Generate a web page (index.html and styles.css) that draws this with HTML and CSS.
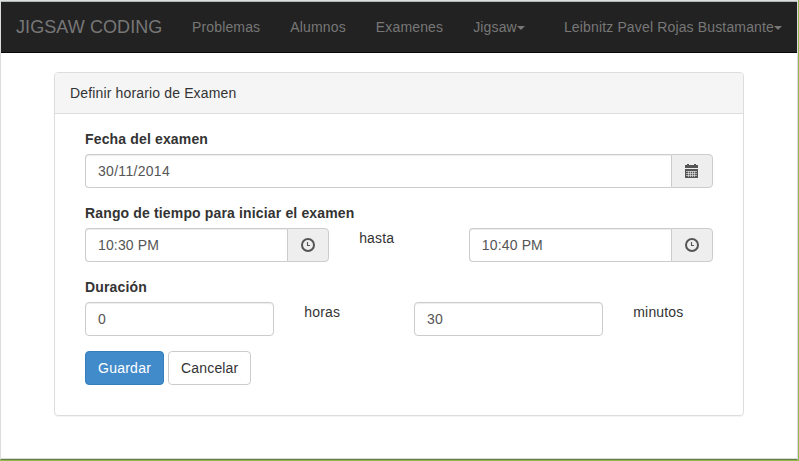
FILE: index.html
```html
<!DOCTYPE html>
<html lang="es">
<head>
<meta charset="utf-8">
<title>Jigsaw Coding</title>
<link rel="stylesheet" href="styles.css">
</head>
<body>
<div class="window">
  <nav class="navbar">
    <a class="brand">JIGSAW CODING</a>
    <a class="nav-item">Problemas</a>
    <a class="nav-item">Alumnos</a>
    <a class="nav-item">Examenes</a>
    <a class="nav-item">Jigsaw<span class="caret"></span></a>
    <a class="nav-item user">Leibnitz Pavel Rojas Bustamante<span class="caret"></span></a>
  </nav>
  <main class="panel">
    <header class="panel-heading">Definir horario de Examen</header>
    <form class="panel-body">
      <label>Fecha del examen</label>
      <div class="row">
        <div class="col full group">
          <div class="control date">30/11/2014</div>
          <div class="addon"><svg width="14" height="14" viewBox="0 0 14 14"><path fill="#555" d="M0 1h2V0h2v1h5V0h2v1h2v3H0zM0 5h13v9H0z"/><path stroke="#eee" stroke-width=".6" d="M1 7.5h11M1 9.5h11M1 11.5h11M3.5 7v6M5.5 7v6M7.5 7v6M9.5 7v6"/></svg></div>
        </div>
      </div>
      <label>Rango de tiempo para iniciar el examen</label>
      <div class="row">
        <div class="col c5 group">
          <div class="control">10:30 PM</div>
          <div class="addon"><svg width="14" height="14" viewBox="0 0 14 14"><circle cx="7" cy="7" r="6" fill="none" stroke="#555" stroke-width="2"/><path fill="none" stroke="#555" stroke-width="1.1" d="M6.5 4v3.5H9"/></svg></div>
        </div>
        <div class="col c2">hasta</div>
        <div class="col c5 group">
          <div class="control">10:40 PM</div>
          <div class="addon"><svg width="14" height="14" viewBox="0 0 14 14"><circle cx="7" cy="7" r="6" fill="none" stroke="#555" stroke-width="2"/><path fill="none" stroke="#555" stroke-width="1.1" d="M6.5 4v3.5H9"/></svg></div>
        </div>
      </div>
      <label>Duración</label>
      <div class="row">
        <div class="col c4"><div class="control">0</div></div>
        <div class="col c2">horas</div>
        <div class="col c4"><div class="control">30</div></div>
        <div class="col c2">minutos</div>
      </div>
      <div class="actions">
        <button type="button" class="btn primary">Guardar</button>
        <button type="button" class="btn">Cancelar</button>
      </div>
    </form>
  </main>
</div>
</body>
</html>
```
FILE: styles.css
```css
* { box-sizing: border-box; }
html { height: 100%; }
body {
  margin: 0;
  height: 461px;
  padding: 0 1px 1px 0;
  background: #8fb850;
  color: #333;
  font: 14px/20px "Liberation Sans", Arial, sans-serif;
  letter-spacing: .15px;
  overflow: hidden;
}
.window {
  height: 460px;
  background: #fff;
  border-left: 1px solid #ddd;
  border-right: 1px solid #ddd;
  border-bottom: 1px solid #66803f;
  border-top: 1px solid #dcdfe0;
  box-shadow: inset 0 1px #b4b8b9, inset 0 -1px #d8dad6;
  padding-top: 1px;
}
.navbar {
  display: flex;
  height: 51px;
  background: #222;
  border-bottom: 1px solid #080808;
  color: #777;
}
.brand { padding: 15px; width: 176px; font-size: 18px; letter-spacing: .08px; white-space: nowrap; }
.nav-item { padding: 15px; white-space: nowrap; }
.user { margin-left: auto; }
.caret {
  display: inline-block;
  vertical-align: middle;
  border-top: 4px solid #777;
  border-left: 4px solid transparent;
  border-right: 4px solid transparent;
}
.panel {
  width: 690px;
  margin: 19px 0 0 53px;
  border: 1px solid #ddd;
  border-radius: 4px;
  box-shadow: 0 1px 1px rgba(0, 0, 0, .05);
}
.panel-heading {
  padding: 10px 15px;
  background: #f5f5f5;
  border-bottom: 1px solid #ddd;
  border-radius: 3px 3px 0 0;
}
.panel-body { padding: 15px 30px 30px; }
label { display: block; margin-bottom: 5px; font-weight: bold; }
.row { display: flex; margin: 0 -15px 15px; }
.col { padding: 0 15px; }
.full { width: 100%; }
.c5 { width: 41.6667%; }
.c4 { width: 33.3333%; }
.c2 { width: 16.6667%; }
.group { display: flex; }
.control {
  flex: 1;
  height: 34px;
  padding: 6px 12px;
  border: 1px solid #ccc;
  border-radius: 4px;
  color: #555;
  box-shadow: inset 0 1px 1px rgba(0, 0, 0, .075);
}
.date { letter-spacing: .3px; }
.group .control { border-radius: 4px 0 0 4px; border-right: 0; }
.addon {
  width: 42px;
  padding: 9px 13px;
  background: #eee;
  border: 1px solid #ccc;
  border-radius: 0 4px 4px 0;
}
.addon svg { display: block; }
.actions { display: flex; gap: 4px; }
.btn {
  height: 34px;
  padding: 6px 12px;
  border: 1px solid #ccc;
  border-radius: 4px;
  background: #fff;
  color: #333;
  font: inherit;
  letter-spacing: .15px;
}
.primary { background: #428bca; border-color: #357ebd; color: #fff; letter-spacing: .25px; }
```
